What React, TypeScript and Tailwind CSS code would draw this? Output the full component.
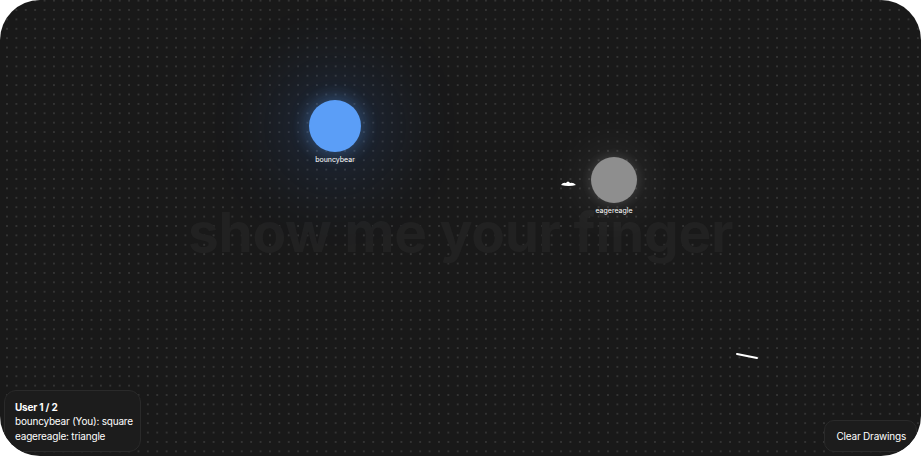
import React from "react";

type Peer = {
    name: string;
    x: number;
    y: number;
    size: number;
    color: string;
    glow: string;
};

const peers: Peer[] = [
    { name: "bouncybear", x: 335, y: 126, size: 52, color: "#5b9ef7", glow: "0 0 70px 36px rgba(59,130,246,0.14), 0 0 16px 4px rgba(96,165,250,0.3)" },
    { name: "eagereagle", x: 614, y: 180, size: 46, color: "#8e8e8e", glow: "0 0 40px 16px rgba(255,255,255,0.06), 0 0 10px 2px rgba(255,255,255,0.12)" },
];

const Cursor = (props: { peer: Peer }): React.JSX.Element => {
    const p = props.peer;
    return <div className="absolute flex flex-col items-center" style={{ left: p.x - p.size / 2, top: p.y - p.size / 2, width: p.size }}>
        <div className="rounded-full" style={{ width: p.size, height: p.size, background: p.color, boxShadow: p.glow }} />
        <span className="mt-[3px] text-[7px] leading-[9px] text-white whitespace-nowrap">{p.name}</span>
    </div>;
};

const App = (): React.JSX.Element => {
    return <div className="w-[921px] h-[456px] bg-white" style={{ fontFamily: "Inter, 'Liberation Sans', sans-serif" }}>
        <div
            className="relative w-full h-full overflow-hidden rounded-[40px] bg-[#191919] flex items-center justify-center"
            style={{ backgroundImage: "radial-gradient(circle, #333333 0.75px, transparent 1.05px)", backgroundSize: "9.4px 9.4px", backgroundPosition: "2.3px 5.3px" }}
        >
            <h1 className="mt-[8px] text-[55px] font-bold tracking-[-0.3px] text-[#212121] select-none whitespace-nowrap">show me your finger</h1>

            {peers.map((p) => <Cursor key={p.name} peer={p} />)}

            {/* drawings */}
            <svg className="absolute left-0 top-0" width="921" height="456">
                <path d="M561 185 Q563 182 566 183 Q568 180 570 183 Q573 182 576 185 Q569 187 561 185 Z" fill="#fff" />
                <line x1="737" y1="354" x2="757" y2="358" stroke="#fff" strokeWidth="2" strokeLinecap="round" />
            </svg>

            <div className="absolute left-[4px] bottom-[4px] w-[137px] rounded-[12px] border border-[#2a2a2a] bg-[#1c1c1c] pl-[10px] pt-[9px] pb-[8px] text-[10px] leading-[14.5px] tracking-[-0.2px] text-white whitespace-nowrap">
                <div className="font-bold">User 1 / 2</div>
                <div>bouncybear (You): square</div>
                <div>eagereagle: triangle</div>
            </div>

            <button className="absolute right-[4px] bottom-[4px] h-[32px] rounded-[10px] border border-[#2a2a2a] bg-[#1c1c1c] pl-[11px] pr-[10px] text-[10px] tracking-[-0.2px] text-white whitespace-nowrap">
                Clear Drawings
            </button>
        </div>
    </div>;
};

export default App;
